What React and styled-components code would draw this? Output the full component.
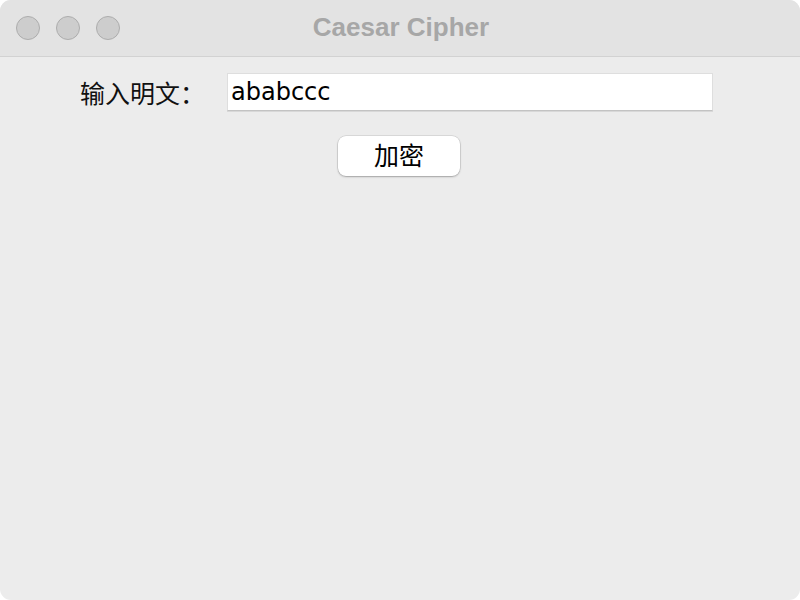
import React, { useState } from "react";
import styled, { createGlobalStyle } from "styled-components";

const GlobalStyle = createGlobalStyle`
  html, body {
    margin: 0;
    padding: 0;
    background: #ffffff;
  }
  body {
    font-family: "Noto Sans CJK SC", "DejaVu Sans", sans-serif;
  }
`;

const App = () => {
  const [text, setText] = useState("ababccc");

  return (
    <>
      <GlobalStyle />
      <Window>
        <TitleBar>
          <Lights>
            <Light />
            <Light />
            <Light />
          </Lights>
          <Title>Caesar Cipher</Title>
        </TitleBar>
        <Content>
          <Row>
            <Label>输入明文：</Label>
            <Input value={text} onChange={(e) => setText(e.target.value)} />
          </Row>
          <ButtonRow>
            <Button>加密</Button>
          </ButtonRow>
        </Content>
      </Window>
    </>
  );
};

export default App;

const Window = styled.div`
  width: 800px;
  height: 600px;
  border-radius: 11px;
  overflow: hidden;
  background: #ececec;
  display: flex;
  flex-direction: column;
`;

const TitleBar = styled.div`
  position: relative;
  height: 56px;
  flex: 0 0 56px;
  background: #e3e3e3;
  border-bottom: 1px solid #d2d2d2;
  display: flex;
  align-items: center;
  justify-content: center;
`;

const Lights = styled.div`
  position: absolute;
  left: 16px;
  top: 16px;
  display: flex;
  gap: 16px;
`;

const Light = styled.div`
  width: 22px;
  height: 22px;
  border-radius: 50%;
  background: #cdcdcd;
  border: 1px solid #adadad;
`;

const Title = styled.div`
  font-family: "Liberation Sans", Arial, sans-serif;
  font-weight: 700;
  font-size: 26px;
  color: #a7a7a7;
  margin-top: -2px;
  padding-left: 2px;
`;

const Content = styled.div`
  flex: 1;
  display: flex;
  flex-direction: column;
`;

const Row = styled.div`
  display: flex;
  align-items: center;
  margin-top: 16px;
  padding-left: 80px;
`;

const Label = styled.div`
  width: 147px;
  font-size: 25px;
  color: #111;
  line-height: 37px;
`;

const Input = styled.input`
  box-sizing: border-box;
  width: 486px;
  height: 38px;
  padding: 0 0 0 3px;
  border: 1px solid #dedede;
  border-bottom: 1px solid #c3c3c3;
  box-shadow: 0 1px 0 #d8d8d8;
  background: #ffffff;
  font-family: "DejaVu Sans", sans-serif;
  font-size: 24px;
  color: #000;
  outline: none;
`;

const ButtonRow = styled.div`
  display: flex;
  justify-content: center;
  margin-top: 25px;
  padding-right: 2px;
`;

const Button = styled.button`
  width: 122px;
  height: 40px;
  border: none;
  border-radius: 8px;
  background: #ffffff;
  box-shadow: 0 0 0 0.5px rgba(0, 0, 0, 0.15), 0 1px 2px rgba(0, 0, 0, 0.25);
  font-family: "Noto Sans CJK SC", sans-serif;
  font-size: 25px;
  line-height: 1;
  color: #000;
  cursor: pointer;
  padding: 0 0 3px;
`;
